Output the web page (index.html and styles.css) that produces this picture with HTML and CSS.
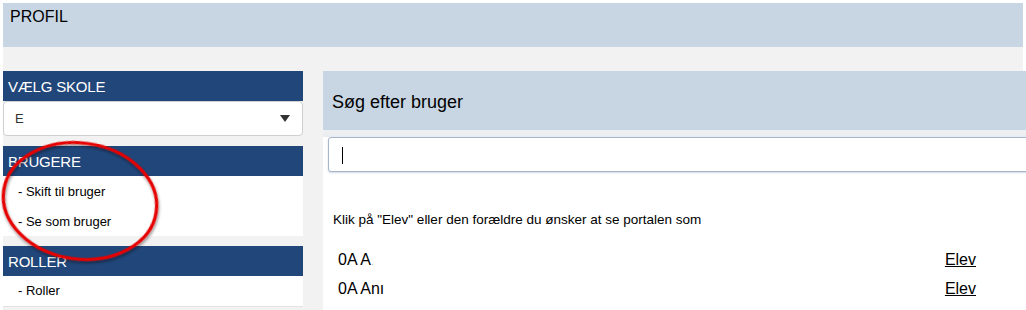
FILE: index.html
```html
<!DOCTYPE html>
<html lang="da">
<head>
<meta charset="utf-8">
<link rel="stylesheet" href="styles.css">
</head>
<body>
<div class="page">
  <div class="topbar">PROFIL</div>
  <div class="main">
    <aside class="sidebar">
      <div class="box">
        <div class="box-head">VÆLG SKOLE</div>
        <div class="select"><span>E</span><span class="caret"></span></div>
      </div>
      <div class="box">
        <div class="box-head">BRUGERE</div>
        <div class="box-body">
          <div class="item">- Skift til bruger</div>
          <div class="item">- Se som bruger</div>
        </div>
      </div>
      <div class="box">
        <div class="box-head">ROLLER</div>
        <div class="box-body short">
          <div class="item">- Roller</div>
        </div>
      </div>
    </aside>
    <section class="content">
      <div class="content-head">Søg efter bruger</div>
      <div class="strip"></div>
      <div class="content-body">
        <div class="search"><span class="cursor"></span></div>
        <p class="hint">Klik på "Elev" eller den forældre du ønsker at se portalen som</p>
        <div class="rows">
          <div class="row"><span class="name">0A A<span class="cut">.</span></span><a class="elev" href="#">Elev</a></div>
          <div class="row"><span class="name">0A Anı</span><a class="elev" href="#">Elev</a></div>
        </div>
      </div>
    </section>
  </div>
  <svg class="circle" width="170" height="130" viewBox="0 0 170 130">
    <defs>
      <filter id="sh" x="-20%" y="-20%" width="140%" height="140%">
        <feDropShadow dx="1" dy="2" stdDeviation="1.6" flood-color="#000" flood-opacity="0.45"/>
      </filter>
    </defs>
    <ellipse cx="80" cy="63" rx="77" ry="58" transform="rotate(8 80 63)" fill="none" stroke="#e60000" stroke-width="3.2" filter="url(#sh)"/>
  </svg>
</div>
</body>
</html>
```
FILE: styles.css
```css
html, body {
  margin: 0;
  padding: 0;
  background: #fff;
  overflow: hidden;
}
body {
  width: 1026px;
  height: 310px;
  font-family: "DejaVu Sans", "Liberation Sans", sans-serif;
  color: #000;
}
.page {
  position: relative;
  margin: 3px 0 0 3px;
  width: 1020px;
  height: 307px;
  background: #f2f2f2;
}
.topbar {
  height: 44px;
  background: #c8d6e3;
  padding: 4px 0 0 7px;
  box-sizing: border-box;
  font-family: "Liberation Sans", sans-serif;
  font-size: 16px;
  line-height: 20px;
}
.main {
  display: flex;
  gap: 20px;
  padding-top: 24px;
}
.sidebar {
  width: 300px;
  flex: none;
  display: flex;
  flex-direction: column;
  gap: 10px;
}
.box-head {
  height: 30px;
  background: #21467a;
  color: #fff;
  font-family: "Liberation Sans", sans-serif;
  font-size: 15px;
  line-height: 32px;
  padding-left: 5px;
  letter-spacing: -0.2px;
}
.select {
  height: 35px;
  box-sizing: border-box;
  background: #fff;
  border: 1px solid #cfcfcf;
  border-radius: 4px;
  display: flex;
  align-items: center;
  justify-content: space-between;
  padding: 0 12px 0 11px;
  font-family: "Liberation Sans", sans-serif;
  font-size: 13px;
  color: #333;
}
.caret {
  width: 0;
  height: 0;
  border-left: 5px solid transparent;
  border-right: 5px solid transparent;
  border-top: 7px solid #333;
}
.box-body {
  background: #fff;
  height: 60px;
  padding-top: 1px;
  box-sizing: border-box;
}
.box-body.short {
  height: 30px;
  border-bottom: 1px solid #e2e2e2;
  box-sizing: content-box;
  padding-top: 0;
}
.item {
  height: 30px;
  line-height: 30px;
  padding-left: 15px;
  font-family: "Liberation Sans", sans-serif;
  font-size: 13px;
}
.content {
  flex: 1;
  background: #fff;
  height: 240px;
}
.content-head {
  height: 59px;
  background: #c8d6e3;
  padding-left: 9px;
  box-sizing: border-box;
  font-family: "Liberation Sans", sans-serif;
  font-size: 18px;
  line-height: 62px;
}
.strip {
  height: 7px;
  background: linear-gradient(#eff0f2, #e9edf2);
}
.content-body {
  padding-left: 5px;
}
.search {
  width: 720px;
  height: 35px;
  box-sizing: border-box;
  border: 1px solid #a7b6cc;
  border-radius: 3px;
  background: #fff;
  box-shadow: 0 1px 2px rgba(120, 140, 170, 0.35);
  padding: 9px 0 0 13px;
}
.cursor {
  display: block;
  width: 1px;
  height: 17px;
  background: #000;
}
.hint {
  margin: 40px 0 0 0;
  padding-left: 5px;
  font-family: "Liberation Sans", sans-serif;
  font-size: 13.5px;
  line-height: 16px;
}
.rows {
  margin-top: 17px;
}
.row {
  display: flex;
  justify-content: space-between;
  width: 638px;
  height: 29px;
  align-items: center;
  padding-left: 10px;
  font-family: "Liberation Sans", sans-serif;
  font-size: 16px;
}
.cut {
  color: #bbb;
  font-size: 10px;
}
.elev {
  color: #000;
  text-decoration: underline;
}
.circle {
  position: absolute;
  left: -3px;
  top: 135px;
  pointer-events: none;
}
```
